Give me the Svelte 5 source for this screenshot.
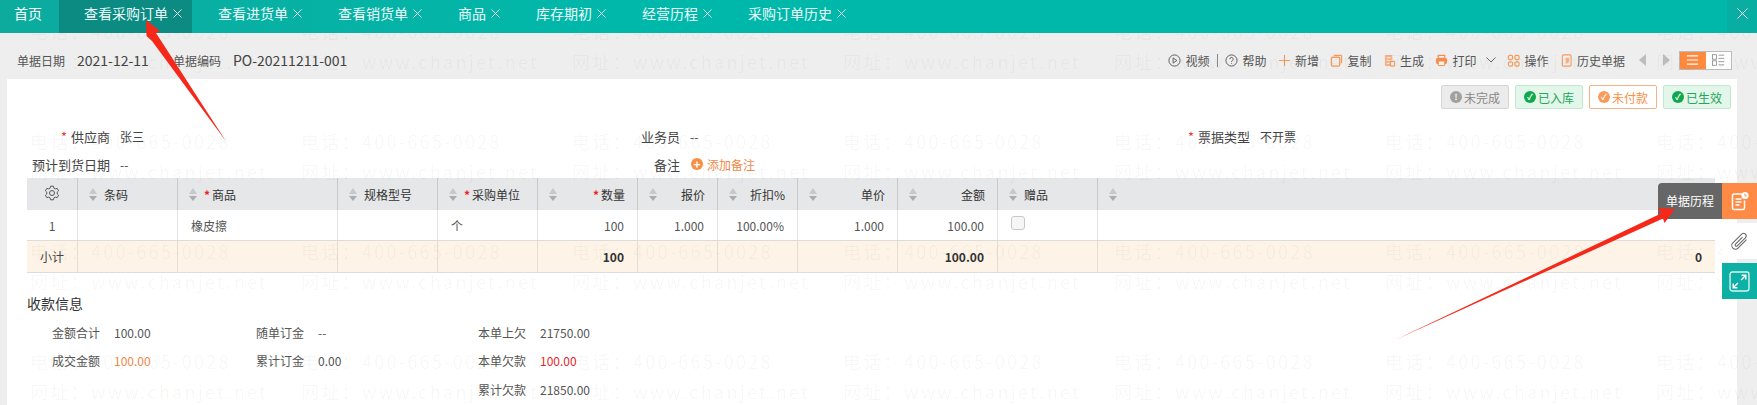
<script>
  const tabs = [
    { t: '查看采购订单', on: true },
    { t: '查看进货单' }, { t: '查看销货单' }, { t: '商品' },
    { t: '库存期初' }, { t: '经营历程' }, { t: '采购订单历史' }
  ];
  const cols = [
    { k: 'set' },
    { l: '条码' },
    { l: '商品', req: true },
    { l: '规格型号' },
    { l: '采购单位', req: true },
    { l: '数量', req: true, r: true },
    { l: '报价', r: true },
    { l: '折扣%', r: true },
    { l: '单价', r: true },
    { l: '金额', r: true },
    { l: '赠品' },
    { l: '' }
  ];
  const row = ['1', '', '橡皮擦', '', '个', '100', '1.000', '100.00%', '1.000', '100.00', '', ''];
  const sum = ['小计', '', '', '', '', '100', '', '', '', '100.00', '', '0'];
  const marks = [];
  for (let r = 0; r < 4; r++) {
    for (let c = 0; c < 7; c++) {
      marks.push('电话\uFF1A400-665-0028');
    }
    for (let c = 0; c < 7; c++) {
      marks.push('网址\uFF1Awww.chanjet.net');
    }
  }
  const pay = [
    [['金额合计', '100.00', ''], ['随单订金', '--', ''], ['本单上欠', '21750.00', '']],
    [['成交金额', '100.00', 'orange'], ['累计订金', '0.00', ''], ['本单欠款', '100.00', 'red']],
    [null, null, ['累计欠款', '21850.00', '']]
  ];
  const statuses = [
    { t: '未完成', c: 'grey', g: '!' },
    { t: '已入库', c: 'green', g: '✓' },
    { t: '未付款', c: 'orange', g: '✓' },
    { t: '已生效', c: 'green', g: '✓' }
  ];
</script>

<div class="page">
  <header class="topbar">
    <span class="home">首页</span>
    {#each tabs as tab}
      <span class="tab" class:on={tab.on}>
        {tab.t}
        <svg class="x" viewBox="0 0 9 9"><path d="M.5.5l8 8M8.5.5l-8 8" /></svg>
      </span>
    {/each}
    <span class="closeall"><svg viewBox="0 0 11 11"><path d="M.5.5l10 10M10.5.5l-10 10" /></svg></span>
  </header>

  <section class="toolbar">
    <span class="lab first">单据日期</span><span class="val">2021-12-11</span>
    <span class="lab second">单据编码</span><span class="val">PO-20211211-001</span>
    <div class="tools">
      <span class="tool"><svg class="ic" viewBox="0 0 14 14"><circle cx="7" cy="7" r="6" fill="none" stroke="#555"/><path d="M5.500 4.200l4 2.800-4 2.800z" fill="none" stroke="#555"/></svg>视频</span>
      <i class="sep"></i>
      <span class="tool"><svg class="ic" viewBox="0 0 14 14"><circle cx="7" cy="7" r="6" fill="none" stroke="#555"/><path d="M5.200 5.500a1.800 1.800 0 1 1 2.600 1.600c-.6.3-.8.7-.8 1.400M7 10v.8" fill="none" stroke="#555"/></svg>帮助</span>
      <span class="tool"><svg class="ic" viewBox="0 0 14 14"><path d="M7 1v12M1 7h12" stroke="#f59a5a" stroke-width="1.200"/></svg>新增</span>
      <span class="tool"><svg class="ic" viewBox="0 0 14 14"><path d="M4 1.500h7.500a1 1 0 0 1 1 1V10" fill="none" stroke="#f59a5a" stroke-width="1.200"/><rect x="1.500" y="3.500" width="9" height="9.500" rx="1.500" fill="none" stroke="#f59a5a" stroke-width="1.500"/></svg>复制</span>
      <span class="tool"><svg class="ic" viewBox="0 0 14 14"><path d="M2 1h8v5.500h-2V13H3a1 1 0 0 1-1-1z" fill="#f7b088"/><path d="M4 4h4M4 7h3M4 10h3" stroke="#fff"/><rect x="8" y="8" width="4.500" height="5" rx="1" fill="none" stroke="#f59a5a" stroke-width="1.200"/></svg>生成</span>
      <span class="tool"><svg class="ic" viewBox="0 0 14 14"><path d="M3.500 4V1.500h7V4" fill="none" stroke="#f58b4c" stroke-width="1.300"/><rect x="1" y="4" width="12" height="7" rx="2.500" fill="#f58b4c"/><rect x="3.500" y="7.500" width="7" height="5" rx=".5" fill="#f7f0ea" stroke="#f58b4c"/></svg>打印</span>
      <svg class="chev" viewBox="0 0 10 6"><path d="M.5.5L5 5 9.500.5" fill="none" stroke="#666"/></svg>
      <span class="tool"><svg class="ic" viewBox="0 0 14 14"><g fill="none" stroke="#f59a5a" stroke-width="1.300"><rect x="1.500" y="1.500" width="4.500" height="4.500" rx="1.500"/><rect x="8.500" y="1.500" width="4.500" height="4.500" rx="1.500"/><rect x="1.500" y="8.500" width="4.500" height="4.500" rx="1.500"/><rect x="8.500" y="8.500" width="4.500" height="4.500" rx="1.500"/></g></svg>操作</span>
      <span class="tool"><svg class="ic" viewBox="0 0 14 14"><rect x="2.500" y="1" width="9.500" height="12" rx="1.500" fill="none" stroke="#f59a5a" stroke-width="1.200"/><path d="M6 4h4v4l-2 2H6z" fill="#f7b088"/></svg>历史单据</span>
      <span class="tri left"></span>
      <span class="tri right"></span>
      <div class="toggle">
        <span class="tg on"><svg viewBox="0 0 14 12"><path d="M1 1.500h12M1 6h12M1 10.500h12" stroke="#fff" stroke-width="1.200"/></svg></span>
        <span class="tg"><svg viewBox="0 0 16 14"><g fill="none" stroke="#888"><rect x=".5" y=".5" width="5" height="5.500"/><rect x=".5" y="8" width="5" height="5.500"/><path d="M8 1h7M8 5h7M8 9h7M8 13h7"/></g></svg></span>
      </div>
    </div>
  </section>

  <main class="panel">
    <div class="statuses">
      {#each statuses as s}
        <span class="status {s.c}"><span class="dot">{s.g}</span>{s.t}</span>
      {/each}
    </div>

    <div class="form">
      <div class="field"><span class="flabel"><em>*</em>供应商</span><span>张三</span></div>
      <div class="field"><span class="flabel">业务员</span><span>--</span></div>
      <div class="field"><span class="flabel"><em>*</em>票据类型</span><span>不开票</span></div>
      <div class="field"><span class="flabel">预计到货日期</span><span>--</span></div>
      <div class="field"><span class="flabel">备注</span><span class="addnote"><span class="plus">+</span>添加备注</span></div>
    </div>

    <div class="table">
      <div class="tr head">
        {#each cols as c}
          {#if c.k === 'set'}
            <div class="td center">
              <svg class="gear" viewBox="0 0 16 16"><path d="M6.600 1.200h2.800l.5 1.900 1.400.8 1.900-.5 1.400 2.400-1.400 1.400v1.600l1.400 1.400-1.400 2.400-1.900-.5-1.400.8-.5 1.900H6.600l-.5-1.900-1.400-.8-1.900.5-1.400-2.400 1.400-1.400V7.200L1.400 5.800l1.400-2.400 1.900.5 1.400-.8z" fill="none" stroke="#555" stroke-linejoin="round"/><circle cx="8" cy="8" r="2.500" fill="none" stroke="#555"/></svg>
            </div>
          {:else}
            <div class="td" class:sp={c.r}>
              <span class="sort"><i class="up"></i><i class="down"></i></span>
              <span class="hl">{#if c.req}<b>*</b>{/if}{c.l}</span>
            </div>
          {/if}
        {/each}
      </div>
      <div class="tr body">
        {#each row as v, i}
          <div class="td" class:center={i === 0} class:right={cols[i].r}>
            {#if i === 10}<span class="check"></span>{:else}{v}{/if}
          </div>
        {/each}
      </div>
      <div class="tr total">
        {#each sum as v, i}
          <div class="td" class:center={i === 0} class:right={cols[i].r || i === 11} class:strong={i > 0}>{v}</div>
        {/each}
      </div>
    </div>

    <h3 class="paytitle">收款信息</h3>
    <div class="pay">
      {#each pay as r}
        {#each r as c}
          <div class="pcell">
            {#if c}
              <span class="plabel">{c[0]}</span><span class={c[2]}>{c[1]}</span>
            {/if}
          </div>
        {/each}
      {/each}
    </div>
  </main>

  <div class="watermark" aria-hidden="true">
    {#each marks as m}<span>{m}</span>{/each}
  </div>

  <aside class="side">
    <div class="sbtn orange">
      <span class="tip">单据历程</span>
      <svg viewBox="0 0 20 20" width="20" height="20"><path d="M14 3H4a1.500 1.500 0 0 0-1.500 1.500v12.500A1.500 1.500 0 0 0 4 18.500h9a1.500 1.500 0 0 0 1.500-1.500V9.500" fill="none" stroke="#fff" stroke-width="1.500"/><path d="M5.500 8h6M5.500 11h6M5.500 14h4" stroke="#fff" stroke-width="1.400"/><circle cx="15" cy="4.500" r="3.600" fill="#fff"/><path d="M15 2.700v2.200h1.600" fill="none" stroke="#ff8a45"/></svg>
    </div>
    <div class="sbtn white">
      <svg viewBox="0 0 24 24" width="25" height="25"><g transform="rotate(45 12 12)"><path d="M15.500 6v11.500a3.500 3.500 0 0 1-7 0V5.500a2.500 2.500 0 0 1 5 0v11a1.200 1.200 0 0 1-2.400 0V7" fill="none" stroke="#666" stroke-width="1"/></g></svg>
    </div>
    <div class="sbtn teal">
      <svg viewBox="0 0 20 20" width="21" height="21"><rect x="1" y="1" width="18" height="18" rx="2" fill="none" stroke="#d8f5f1" stroke-width="1.300"/><path d="M11.500 8.500L16 4M12 4h4v4M8.500 11.500L4 16M4 12v4h4" fill="none" stroke="#fff" stroke-width="1.300"/></svg>
    </div>
  </aside>

  <svg class="arrows" viewBox="0 0 1757 405" width="1757" height="405">
    <polygon points="146,20 160,31 156,33 226.500,142 152,41 146.500,36" fill="#f5281a" />
    <polygon points="1675,209 1658,208 1661,213.500 1395,340 1663,218.500 1664.500,223" fill="#f5281a" />
  </svg>
</div>

<style>
  :global(body) {
    margin: 0;
    background: #eeeeee;
  }
  .page {
    position: relative;
    width: 1757px;
    height: 405px;
    overflow: hidden;
    background: #eeeeee;
    font-family: "Noto Sans CJK SC", "Noto Sans", sans-serif;
    font-size: 12px;
    color: #444;
  }
  .topbar {
    position: relative;
    z-index: 3;
    height: 33px;
    display: flex;
    align-items: center;
    background: linear-gradient(90deg, #0cab9e, #00b8aa 35%);
    color: #fff;
    font-size: 14px;
    white-space: nowrap;
  }
  .home {
    padding: 0 17px 7px 14px;
  }
  .tab {
    height: 100%;
    box-sizing: border-box;
    display: flex;
    align-items: center;
    gap: 5px;
    padding: 0 10px 7px 26px;
    color: #eafafa;
  }
  .tab.on {
    padding-left: 25px;
    background: #0b8b82;
  }
  .x {
    width: 9px;
    height: 9px;
  }
  .x path {
    stroke: #e4f7f5;
    stroke-width: 1;
    fill: none;
  }
  .closeall {
    margin-left: auto;
    width: 30px;
    height: 100%;
    box-sizing: border-box;
    padding-bottom: 7px;
    display: flex;
    align-items: center;
    justify-content: center;
    background: #08aea1;
  }
  .closeall svg {
    width: 11px;
    height: 11px;
  }
  .closeall path {
    stroke: #fff;
    fill: none;
  }
  .toolbar {
    height: 46px;
    padding: 8px 25px 0 17px;
    box-sizing: border-box;
    display: flex;
    align-items: center;
    white-space: nowrap;
  }
  .lab {
    color: #555;
  }
  .val {
    margin-left: 12px;
    font-size: 14px;
    color: #444;
  }
  .second {
    margin-left: 24px;
  }
  .tools {
    margin-left: auto;
    display: flex;
    align-items: center;
    gap: 11.500px;
  }
  .tool {
    display: inline-flex;
    align-items: center;
    gap: 4px;
    color: #555;
  }
  .ic {
    width: 13px;
    height: 13px;
  }
  .sep {
    width: 1px;
    height: 13px;
    background: #888;
    margin: 0 -4px;
  }
  .chev {
    width: 10px;
    height: 6px;
    margin-left: -2px;
  }
  .tri {
    width: 0;
    height: 0;
    border-top: 6px solid transparent;
    border-bottom: 6px solid transparent;
  }
  .tri.left {
    margin-left: 2.500px;
    border-right: 7px solid #bdbdbd;
  }
  .tri.right {
    margin-left: 5.500px;
    border-left: 7px solid #bdbdbd;
  }
  .toggle {
    display: flex;
    height: 19px;
    width: 53px;
    margin-left: -2.500px;
    border: 1px solid #bbb;
    box-sizing: border-box;
    background: #fff;
  }
  .tg {
    flex: 1;
    display: flex;
    align-items: center;
    justify-content: center;
  }
  .tg.on {
    background: #ff8a3d;
  }
  .tg svg {
    width: 13px;
    height: 12px;
  }
  .panel {
    width: 1730px;
    height: 326px;
    margin-left: 7px;
    background: #fff;
    overflow: hidden;
  }
  .statuses {
    display: flex;
    justify-content: flex-end;
    gap: 6px;
    padding: 6px 6px 0 0;
  }
  .status {
    width: 68px;
    height: 24px;
    box-sizing: border-box;
    border: 1px solid;
    border-radius: 2px;
    display: flex;
    align-items: center;
    justify-content: center;
    gap: 2px;
  }
  .dot {
    width: 12px;
    height: 12px;
    border-radius: 50%;
    color: #fff;
    font-size: 8px;
    font-weight: 700;
    line-height: 12px;
    text-align: center;
  }
  .status.grey {
    background: #ebebeb;
    border-color: #d5d5d5;
    color: #888;
  }
  .grey .dot {
    background: #a0a0a0;
  }
  .status.green {
    background: #e3f6ea;
    border-color: #c3e8d0;
    color: #24a65a;
  }
  .green .dot {
    background: #10a84e;
  }
  .status.orange {
    background: #fff;
    border-color: #f8b182;
    color: #fb8f45;
  }
  .orange .dot {
    background: #fb9a58;
  }
  .form {
    margin-top: 13px;
    display: grid;
    grid-template-columns: repeat(3, 570px);
    grid-auto-rows: 28px;
  }
  .field {
    display: flex;
    align-items: center;
    gap: 10px;
    color: #444;
  }
  .field:nth-child(4) {
    grid-column: 1;
  }
  .flabel {
    width: 103px;
    font-size: 13px;
    text-align: right;
    white-space: nowrap;
  }
  .flabel em {
    color: #f03a3a;
    font-style: normal;
    margin-right: 4px;
  }
  .addnote {
    display: flex;
    align-items: center;
    gap: 4px;
    color: #f08a4b;
    margin-left: 1px;
  }
  .plus {
    width: 12px;
    height: 12px;
    border-radius: 50%;
    background: #f98f45;
    color: #fff;
    font-size: 12px;
    font-weight: 700;
    line-height: 11px;
    text-align: center;
  }
  .table {
    margin-left: 20px;
    width: 1688px;
    border-bottom: 1px solid #dcdcdc;
    box-sizing: border-box;
  }
  .tr {
    display: grid;
    grid-template-columns: 51px 100px 160px 100px 100px 100px 80px 80px 100px 100px 100px 1fr;
    color: #444;
  }
  .td {
    display: flex;
    align-items: center;
    padding: 0 13px;
    border-right: 1px solid #d4d4d4;
    min-width: 0;
    white-space: nowrap;
    box-sizing: border-box;
  }
  .td:last-child {
    border-right: 0;
  }
  .head {
    height: 32px;
    background: #e6e7e9;
    color: #333;
  }
  .head .td {
    gap: 6px;
    padding: 0 12px 0 11px;
    border-right-color: #c9c9c9;
  }
  .head .td.sp {
    justify-content: space-between;
  }
  .body {
    height: 31px;
    background: #fff;
    border-bottom: 1px solid #dcdcdc;
    box-sizing: border-box;
  }
  .body .td {
    border-right-color: #e4e4e4;
    color: #555;
  }
  .total {
    height: 31px;
    background: #fdf3e7;
    color: #444;
  }
  .total .td {
    border-right-color: #e4ddd2;
  }
  .center {
    justify-content: center;
    padding: 0;
  }
  .right {
    justify-content: flex-end;
  }
  .strong {
    font-weight: 700;
    color: #333;
  }
  .gear {
    width: 16px;
    height: 16px;
    margin-top: -3px;
  }
  .sort {
    display: inline-flex;
    flex-direction: column;
    gap: 2px;
    width: 9px;
  }
  .up,
  .down {
    width: 0;
    height: 0;
    border-left: 4px solid transparent;
    border-right: 4px solid transparent;
  }
  .up {
    border-bottom: 6px solid #c6c8cc;
  }
  .down {
    border-top: 5px solid #a9acb0;
  }
  .hl b {
    color: #e8252a;
    margin-right: 2px;
  }
  .check {
    width: 14px;
    height: 14px;
    box-sizing: border-box;
    margin-top: -5px;
    border: 1px solid #c8c8c8;
    border-radius: 3px;
    background: #f6f6f6;
  }
  .paytitle {
    margin: 20px 0 0 20px;
    height: 20px;
    font-size: 14px;
    line-height: 20px;
    font-weight: 400;
    color: #333;
  }
  .pay {
    margin: 5px 0 0 45px;
    display: grid;
    grid-template-columns: 204px 222px 1fr;
    grid-auto-rows: 28.500px;
  }
  .pcell {
    display: flex;
    align-items: center;
    color: #555;
  }
  .plabel {
    margin-right: 14px;
  }
  .orange {
    color: #f08a4b;
  }
  .red {
    color: #e8252a;
  }
  .watermark {
    position: absolute;
    left: 30px;
    top: 16px;
    z-index: 1;
    display: grid;
    grid-template-columns: repeat(7, 271px);
    grid-template-rows: repeat(8, 30px);
    pointer-events: none;
    color: rgba(0, 0, 0, 0.04);
    font-size: 18px;
    letter-spacing: 2.300px;
    line-height: 30px;
    white-space: nowrap;
  }
  .watermark span:nth-child(n + 15):nth-child(-n + 28) {
    transform: translateY(50px);
  }
  .watermark span:nth-child(n + 29):nth-child(-n + 42) {
    transform: translateY(100px);
  }
  .watermark span:nth-child(n + 43) {
    transform: translateY(150px);
  }
  .side {
    position: absolute;
    right: 0;
    top: 183px;
    width: 35px;
    z-index: 4;
    display: flex;
    flex-direction: column;
    gap: 4px;
  }
  .sbtn {
    position: relative;
    display: flex;
    align-items: center;
    justify-content: center;
    width: 35px;
    height: 36px;
  }
  .sbtn.orange {
    background: #ff8a45;
  }
  .sbtn.white {
    background: #fff;
  }
  .sbtn.teal {
    background: #0cb0a4;
  }
  .tip {
    position: absolute;
    right: 35px;
    top: 0;
    width: 64px;
    height: 36px;
    line-height: 36px;
    text-align: center;
    color: #fff;
    background: #666;
    border-radius: 4px 0 0 0;
    white-space: nowrap;
  }
  .arrows {
    position: absolute;
    left: 0;
    top: 0;
    z-index: 5;
    pointer-events: none;
  }
</style>
